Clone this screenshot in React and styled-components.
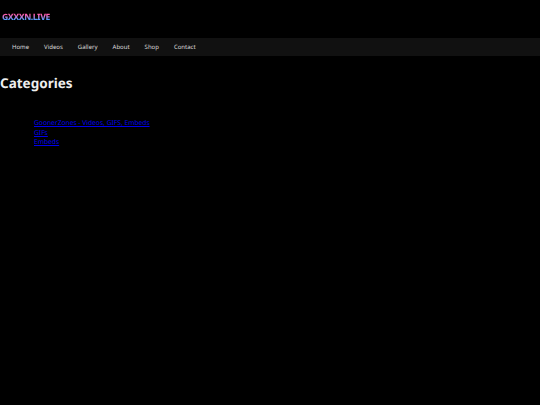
import React from 'react'
import styled, { createGlobalStyle } from 'styled-components'

const GlobalStyle = createGlobalStyle`
  html, body {
    margin: 0;
    padding: 0;
    background: #000;
    font-family: "Noto Sans", "Open Sans", sans-serif;
    text-rendering: geometricPrecision;
  }
`

const Page = styled.div`
  min-height: 405px;
  background: #000;
  color: #eee;
  overflow: hidden;
`

const Header = styled.header`
  height: 38px;
  display: flex;
  align-items: center;
  padding: 0 2px 4px;
  box-sizing: border-box;
`

const Logo = styled.div`
  font-size: 8.6px;
  font-weight: 800;
  letter-spacing: -0.5px;
  line-height: 12px;
  background: linear-gradient(180deg, #ff5cab 30%, #4f9dff 72%);
  -webkit-background-clip: text;
  background-clip: text;
  color: transparent;
`

const Nav = styled.nav`
  height: 18px;
  background: #111;
  display: flex;
  align-items: center;
  gap: 15px;
  padding-left: 12px;
`

const NavLink = styled.a`
  font-size: 6px;
  line-height: 18px;
  color: #ddd;
  text-decoration: none;
`

const Title = styled.h1`
  margin: 17px 0 0;
  font-size: 13.5px;
  line-height: 20px;
  font-weight: 700;
  color: #eee;
`

const CategoryList = styled.ul`
  list-style: none;
  margin: 25px 0 0;
  padding: 0 0 0 34px;
`

const CategoryItem = styled.li`
  font-size: 6.7px;
  line-height: 9.5px;
`

const CategoryLink = styled.a`
  color: #0000ee;
  text-decoration: underline;
`

const navItems = ['Home', 'Videos', 'Gallery', 'About', 'Shop', 'Contact']
const categories = ['GoonerZones - Videos, GIFS, Embeds', 'GIFs', 'Embeds']

export default function App() {
  return (
    <Page>
      <GlobalStyle />
      <Header>
        <Logo>GXXXN.LIVE</Logo>
      </Header>
      <Nav>
        {navItems.map((item) => (
          <NavLink key={item} href="#">{item}</NavLink>
        ))}
      </Nav>
      <Title>Categories</Title>
      <CategoryList>
        {categories.map((item) => (
          <CategoryItem key={item}>
            <CategoryLink href="#">{item}</CategoryLink>
          </CategoryItem>
        ))}
      </CategoryList>
    </Page>
  )
}
